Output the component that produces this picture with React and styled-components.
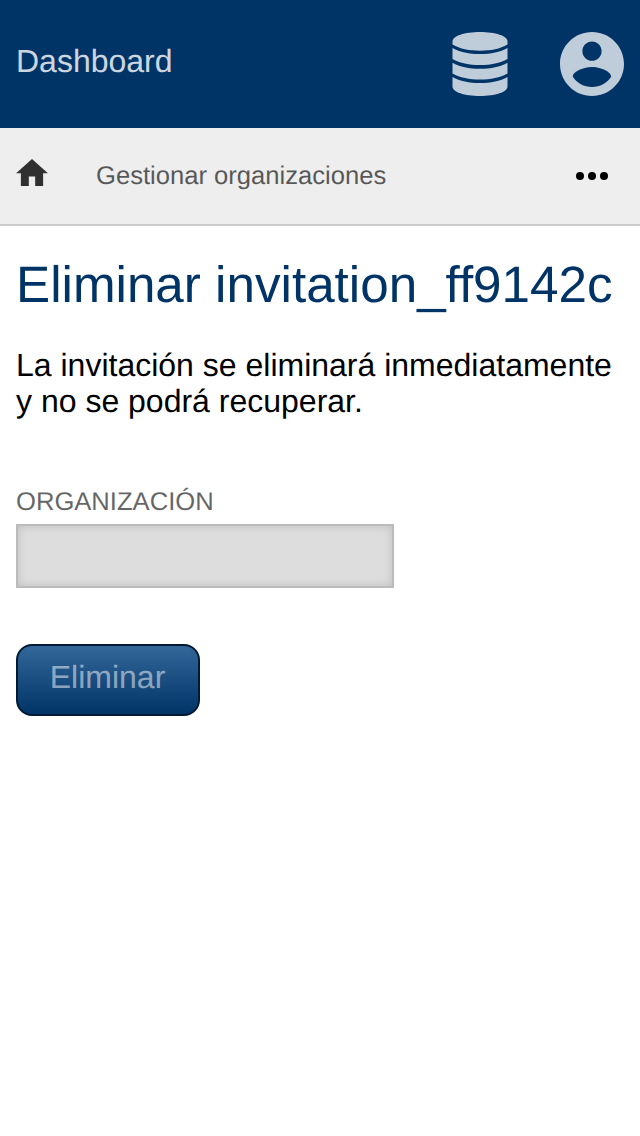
import React from 'react';
import styled, { createGlobalStyle } from 'styled-components';

const GlobalStyle = createGlobalStyle`
  *, *::before, *::after { box-sizing: border-box; }
  body { margin: 0; background: #fff; color: #000; font: 32px/36px "Liberation Sans", Arial, sans-serif; text-rendering: geometricPrecision; }
`;
const Header = styled.header`
  height: 128px;
  display: flex;
  align-items: center;
  justify-content: space-between;
  padding: 0 16px;
  background: #003366;
`;
const Brand = styled.a`
  color: #fff;
  opacity: 0.8;
  padding-bottom: 6px;
`;
const Actions = styled.div`
  display: flex;
  align-items: center;
  gap: 52px;
  color: #bfccd9;
`;
const Icon = styled.svg`
  display: block;
  fill: currentColor;
`;
const Breadcrumb = styled.nav`
  height: 98px;
  display: flex;
  align-items: center;
  padding: 0 32px 0 16px;
  background: #eee;
  border-bottom: 2px solid #ccc;
`;
const HomeLink = styled.a`
  color: #303030;
  padding-bottom: 8px;
`;
const Crumb = styled.span`
  margin-left: 48px;
  color: #000;
  opacity: 0.63;
  font-size: 25.6px;
  line-height: 32px;
  flex: 1;
`;
const Main = styled.main`
  padding: 30px 16px 0;
`;
const Title = styled.h1`
  margin: 0;
  font-size: 51.2px;
  line-height: 58px;
  font-weight: 400;
  color: #003366;
  white-space: nowrap;
`;
const Message = styled.p`
  margin: 33px 0 67px;
`;
const Label = styled.label`
  display: block;
  font-size: 25.6px;
  line-height: 32px;
  margin-bottom: 6px;
  color: #000;
  opacity: 0.6;
  text-transform: uppercase;
`;
const Input = styled.input`
  display: block;
  width: 378px;
  height: 64px;
  border: 2px solid #bbb;
  border-radius: 0;
  background: #ddd;
  box-shadow: inset 0 0 8px rgba(0, 0, 0, 0.15);
`;
const Button = styled.button`
  display: block;
  width: 184px;
  height: 72px;
  margin-top: 56px;
  padding: 0 1px 6px 0;
  border: 2px solid #001a33;
  border-radius: 16px;
  background: linear-gradient(#336699, #003366);
  font: inherit;
  text-rendering: inherit;
`;
const ButtonText = styled.span`
  color: #fff;
  opacity: 0.5;
`;

export default function App() {
  return (
    <>
      <GlobalStyle />
      <Header>
        <Brand>Dashboard</Brand>
        <Actions>
          <Icon width="56" height="64" viewBox="0 0 56 64">
            <path d="M.5 9.500C.5 4 12.500 0 28 0s27.500 4 27.500 9.500V12.500C48 17 39 18.700 28 18.700S8 17 .5 12.500z" />
            <path d="M.5 16C8 20 17 22 28 22s20-2 27.500-6V27C48 31.300 39 33 28 33S8 31.300 .5 27z" />
            <path d="M.5 30.700C8 34.700 17 36.700 28 36.700s20-2 27.500-6V41.500C48 45.700 39 47.500 28 47.500S8 45.700.5 41.500z" />
            <path d="M.5 45C8 49 17 51 28 51s20-2 27.500-6V54.500C55.500 60 43.500 64 28 64S.5 60 .5 54.500z" />
          </Icon>
          <Icon width="64" height="64" viewBox="2 2 20 20">
            <path d="M12 2C6.480 2 2 6.480 2 12s4.480 10 10 10 10-4.480 10-10S17.520 2 12 2zm0 3c1.660 0 3 1.340 3 3s-1.340 3-3 3-3-1.340-3-3 1.340-3 3-3zm0 14.200c-2.500 0-4.710-1.280-6-3.220.030-1.990 4-3.080 6-3.080 1.990 0 5.970 1.090 6 3.080-1.290 1.940-3.500 3.220-6 3.220z" />
          </Icon>
        </Actions>
      </Header>
      <Breadcrumb>
        <HomeLink>
          <Icon width="32" height="27" viewBox="2 3 20 17">
            <path d="M10 20v-6h4v6h5v-8h3L12 3 2 12h3v8z" />
          </Icon>
        </HomeLink>
        <Crumb>Gestionar organizaciones</Crumb>
        <Icon width="32" height="8" viewBox="0 0 32 8" color="#000">
          <circle cx="4" cy="4" r="4" />
          <circle cx="16" cy="4" r="4" />
          <circle cx="28" cy="4" r="4" />
        </Icon>
      </Breadcrumb>
      <Main>
        <Title>Eliminar invitation_ff9142c</Title>
        <Message>La invitación se eliminará inmediatamente y no se podrá recuperar.</Message>
        <Label htmlFor="organization">Organización</Label>
        <Input id="organization" disabled />
        <Button disabled><ButtonText>Eliminar</ButtonText></Button>
      </Main>
    </>
  );
}
